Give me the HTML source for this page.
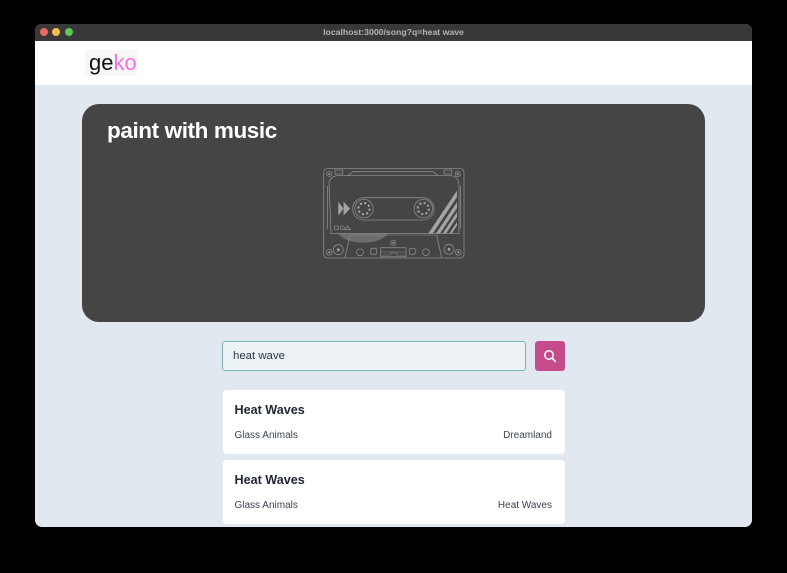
<!DOCTYPE html>
<html>
<head>
<meta charset="utf-8">
<style>
html,body{margin:0;padding:0;width:787px;height:573px;overflow:hidden;background:#000;font-family:"Liberation Sans",sans-serif}
div,span{position:absolute;white-space:nowrap}
#win{left:35px;top:24px;width:717px;height:503px;border-radius:7px;overflow:hidden;background:#e2e8f0}
#bar{left:0;top:0;width:717px;height:17px;background:#383838}
.dot{width:8px;height:8px;border-radius:50%;top:4px}
#url{left:0;width:717px;top:2px;text-align:center;font-size:8.7px;line-height:12px;font-weight:bold;color:#b5b5b5}
#head{left:0;top:17px;width:717px;height:44px;background:#fff}
#logo{left:50px;top:9px;width:52px;height:26px;background:#f7f7f7}
#logo span{left:4px;top:-3px;font-size:22px;line-height:32px;color:#111}
#hero{left:47px;top:80px;width:623px;height:218px;border-radius:17px;background:#454545}
#title{left:25px;top:12px;font-size:22.5px;line-height:30px;font-weight:bold;color:#fff;letter-spacing:-.4px}
#input{left:187px;top:317px;width:302px;height:28px;border:1px solid #7fb2b2;border-radius:3px;background:#edf2f7;color:#2d3748;font-size:11.4px;line-height:28px;text-indent:10px}
#btn{left:500px;top:317px;width:30px;height:30px;border-radius:3px;background:#c64b8c}
.card{left:187.5px;width:342.5px;height:64px;border-radius:4px;background:#fff;color:#3a4454}
.t{left:12px;top:12px;font-size:12.6px;line-height:17px;font-weight:bold;color:#1f2533}
.a{left:12px;top:39px;font-size:10px;line-height:14px}
.r{right:13px;top:39px;font-size:10px;line-height:14px}
#art{position:absolute;left:0;top:0;filter:blur(.25px)}
</style>
</head>
<body>
<div id="win">
  <div id="bar">
    <div class="dot" style="left:4.5px;background:#ec6a5e"></div>
    <div class="dot" style="left:17px;background:#f4bf4f"></div>
    <div class="dot" style="left:29.5px;background:#61c554"></div>
    <div id="url">localhost:3000/song?q=heat wave</div>
  </div>
  <div id="head">
    <div id="logo"><span>ge<b style="font-weight:normal;color:#f76fe8">ko</b></span></div>
  </div>
  <div id="hero"><div id="title">paint with music</div></div>
  <div id="input">heat wave</div>
  <div id="btn">
    <svg width="30" height="30" viewBox="0 0 30 30" style="position:absolute;left:0;top:0"><circle cx="14" cy="14" r="4.2" fill="none" stroke="#fff" stroke-width="1.5"/><path d="M17.2 17.2L20.3 20.3" stroke="#fff" stroke-width="1.6" stroke-linecap="round"/></svg>
  </div>
  <div class="card" style="top:366px"><div class="t">Heat Waves</div><div class="a">Glass Animals</div><div class="r">Dreamland</div></div>
  <div class="card" style="top:436px"><div class="t">Heat Waves</div><div class="a">Glass Animals</div><div class="r">Heat Waves</div></div>
</div>
<svg id="art" width="787" height="573" viewBox="0 0 787 573">
  <path d="M338 233.5H388C384 239 375 242.7 363 242.7C351 242.7 342 239 338 233.5Z" fill="#6c6c6c"/>
  <g fill="none" stroke="#8a8a8a" stroke-width=".8">
    <rect x="323.7" y="168.4" width="140.3" height="89.6" rx="4"/>
    <path d="M348 175.5L353 171.7H433L438 175.5"/>
    <path d="M335 170H342.7V174H335ZM444 170H451.7V174H444Z"/>
    <path d="M329 182Q331 176 338 175.6H450Q458 176 459 184V233.5H331Z"/>
    <path d="M327.5 186V229M460.5 186V229"/>
    <rect x="352.7" y="197.7" width="81.3" height="22.3" rx="11.1"/>
    <circle cx="364" cy="208.6" r="9.2"/>
    <circle cx="423.3" cy="208.6" r="9.2"/>
    <circle cx="364" cy="208.6" r="5.6" stroke="#a4a4a4" stroke-dasharray="2.2 2.2" stroke-width="2"/>
    <circle cx="423.3" cy="208.6" r="5.6" stroke="#a4a4a4" stroke-dasharray="2.2 2.2" stroke-width="2"/>
    <rect x="334.5" y="226" width="4.2" height="3.6" rx=".8"/>
    <circle cx="342.3" cy="227.8" r="2"/>
    <path d="M345 229.6L347.6 226L350.2 229.6Z"/>
    <path d="M349.9 235L345 258M436.7 235L441.7 258"/>
    <path d="M349.9 235H436.7" stroke-width=".6"/>
    <circle cx="338.3" cy="249.7" r="5"/>
    <circle cx="449" cy="249.3" r="5"/>
    <circle cx="329.3" cy="252.3" r="2.8"/>
    <circle cx="458.3" cy="252.3" r="2.8"/>
    <circle cx="329.3" cy="174" r="2.6"/>
    <circle cx="457.7" cy="174" r="2.6"/>
    <circle cx="393.3" cy="242.7" r="2.6"/>
    <circle cx="360" cy="252.3" r="3.4"/>
    <circle cx="426" cy="252.3" r="3.4"/>
    <rect x="370.7" y="248.3" width="6" height="6" rx="1.6"/>
    <rect x="409.3" y="248.3" width="6" height="6" rx="1.6"/>
    <rect x="380.7" y="247.7" width="25.3" height="9"/>
    <path d="M380.7 252H406M382 255H390.5V253H396.5V255H405" stroke-width=".6"/>
  </g>
  <g fill="#a4a4a4">
    <path d="M338.3 201.7L343.4 208.6L338.3 215.5ZM343.6 201.7L350 208.6L343.6 215.5Z"/>
    <path d="M428.3 233.5H432.7L457 197V190.5Z"/>
    <path d="M436 233.5H440L457 208V202Z"/>
    <path d="M442.7 233.5H446L457 217V212Z"/>
    <path d="M449.3 233.5H451.7L457 225.5V222Z"/>
    <circle cx="338.3" cy="249.7" r="1.4"/>
    <circle cx="449" cy="249.3" r="1.4"/>
    <circle cx="329.3" cy="252.3" r="1"/>
    <circle cx="458.3" cy="252.3" r="1"/>
    <circle cx="329.3" cy="174" r="1"/>
    <circle cx="457.7" cy="174" r="1"/>
    <circle cx="393.3" cy="242.7" r="1"/>
  </g>
</svg>
</body>
</html>
